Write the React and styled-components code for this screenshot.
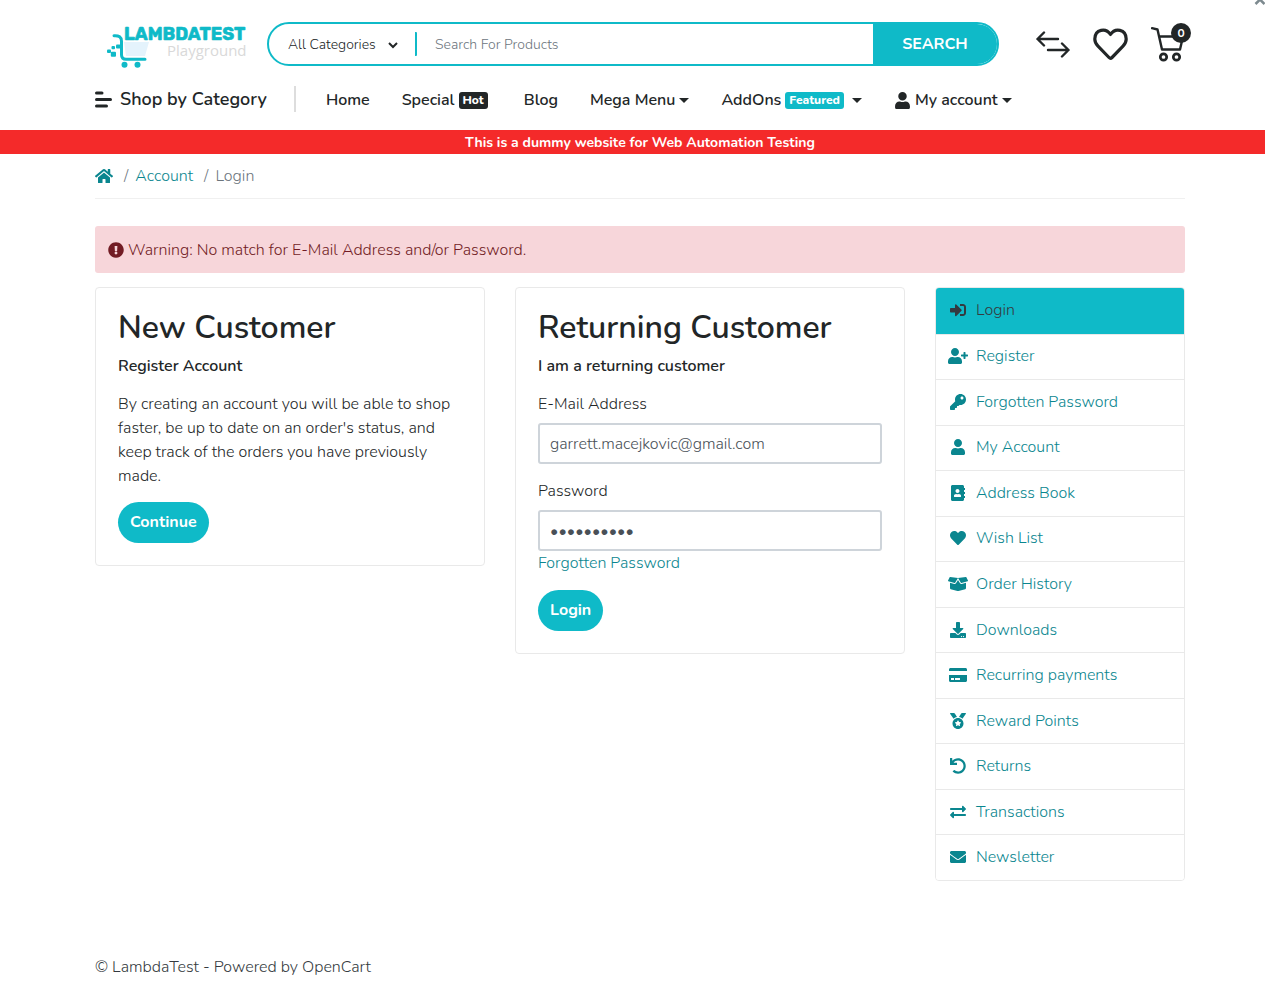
import React from 'react';
import styled, { createGlobalStyle, ThemeProvider } from 'styled-components';
import {
  FaHome, FaSignInAlt, FaUserPlus, FaKey, FaUser, FaAddressBook, FaHeart, FaBoxOpen,
  FaDownload, FaCreditCard, FaMedal, FaUndo, FaExchangeAlt, FaEnvelope, FaExclamationCircle,
} from 'react-icons/fa';

const theme = {
  teal: '#0fbac8',
  link: '#0a868f',
  ink: '#222627',
  line: '#e9e9e9',
  muted: '#6c757d',
};

const GlobalStyle = createGlobalStyle`
  *, *::before, *::after { box-sizing: border-box; }
  body {
    margin: 0;
    background: #fff;
    color: ${theme.ink};
    font: 300 16px/24px Nunito, Lato, "Open Sans", sans-serif;
  }
  button, input, select { font: inherit; color: inherit; margin: 0; }
  a { color: inherit; text-decoration: none; }
  h2, p, ul, ol { margin: 0; padding: 0; }
  ul, ol { list-style: none; }
  svg { display: block; flex: none; }
`;

const Page = styled.div`
  position: relative;
  overflow: hidden;
`;

const ScrollHint = styled.svg`
  position: absolute;
  top: 0;
  right: 0;
`;

const Shell = styled.div`
  padding: 0 15px 0 30px;
`;

const Inner = styled.div`
  max-width: 1090px;
  margin: 0 auto;
`;

const TopBar = styled.div`
  display: grid;
  grid-template-columns: 172px minmax(0, 1fr) auto;
  align-items: center;
  padding-top: 20px;
`;

const LogoLink = styled.a`
  padding-left: 12px;
`;

const LogoMark = styled.text`
  font: 700 18px Rubik, Roboto, sans-serif;
`;

const LogoSub = styled.text`
  font: 400 15px "Open Sans", "Noto Sans", sans-serif;
`;

const SearchForm = styled.form`
  display: flex;
  height: 44px;
  border: 2px solid ${(p) => p.theme.teal};
  border-radius: 22px;
  overflow: hidden;
  font-size: 14px;
`;

const CategoryWrap = styled.div`
  display: grid;
  grid-template-columns: 1fr 10px;
  align-items: center;
  width: 148px;
  padding-right: 17px;
  margin: 8px 0;
  border-right: 2px solid ${(p) => p.theme.teal};
  border-radius: 1px;
`;

const CategorySelect = styled.select`
  appearance: none;
  width: 100%;
  padding: 1px 0 0 19px;
  border: 0;
  background: none;
`;

const SearchInput = styled.input`
  flex: 1;
  min-width: 0;
  padding: 2px 18px 0;
  border: 0;
  outline: 0;
  &::placeholder { color: ${(p) => p.theme.muted}; opacity: 1; }
`;

const SearchButton = styled.button`
  width: 124px;
  border: 0;
  background: ${(p) => p.theme.teal};
  color: #fff;
  font-size: 16px;
  font-weight: 700;
`;

const Tools = styled.div`
  display: flex;
  align-items: center;
  gap: 23px;
  padding-left: 37px;
`;

const ToolLink = styled.a`
  position: relative;
`;

const CartCount = styled.span`
  position: absolute;
  top: -2px;
  right: -6px;
  width: 20px;
  border-radius: 10px;
  background: ${(p) => p.theme.ink};
  color: #fff;
  font-size: 12px;
  font-weight: 700;
  line-height: 20px;
  text-align: center;
`;

const Nav = styled.nav`
  display: flex;
  align-items: center;
  height: 62px;
  font-weight: 600;
`;

const ShopButton = styled.button`
  display: flex;
  align-items: center;
  gap: 8px;
  padding: 0 27px 0 0;
  border: 0;
  border-right: 2px solid #ddd;
  background: none;
  font-size: 18px;
  font-weight: 600;
  line-height: 26px;
`;

const NavList = styled.ul`
  display: flex;
  gap: 32px;
  padding: 2px 0 0 30px;
`;

const NavLink = styled.a`
  display: flex;
  align-items: center;
  gap: 4px;
`;

const Tag = styled.span`
  margin-right: 4px;
  padding: 0 4px;
  border-radius: 3px;
  background: ${(p) => (p.$teal ? p.theme.teal : p.theme.ink)};
  color: #fff;
  font-size: 12px;
  font-weight: 800;
  line-height: 17px;
`;

const Caret = styled.span`
  border: 5px solid transparent;
  border-top-color: currentColor;
  border-bottom: 0;
`;

const Banner = styled.div`
  padding: 1px 0 0 15px;
  background: #f42a2a;
  color: #fff;
  font-size: 14px;
  font-weight: 700;
  line-height: 23px;
  text-align: center;
`;

const Crumbs = styled.ol`
  display: flex;
  align-items: center;
  height: 45px;
  border-bottom: 1px solid #f0f0f0;
  color: ${(p) => p.theme.muted};
`;

const Crumb = styled.li`
  display: flex;
  align-items: center;
  a { color: ${(p) => p.theme.link}; }
  & + &::before { content: '/'; padding: 0 7px 0 11px; }
`;

const Alert = styled.div`
  display: flex;
  align-items: center;
  gap: 4px;
  margin: 27px 0 14px;
  padding: 12px 13px 11px;
  border-radius: 3px;
  background: #f7d6da;
  color: #721c24;
`;

const Columns = styled.div`
  display: grid;
  grid-template-columns: minmax(0, 1fr) minmax(0, 1fr) 250px;
  align-items: start;
  gap: 30px;
`;

const Card = styled.section`
  padding: 20px 22px 22px;
  border: 1px solid ${(p) => p.theme.line};
  border-radius: 4px;
`;

const Title = styled.h2`
  margin-bottom: 6px;
  font-size: 32px;
  font-weight: 600;
  line-height: 40px;
`;

const Text = styled.p`
  margin-bottom: 14px;
  font-weight: ${(p) => (p.$strong ? 600 : 300)};
`;

const Field = styled.div`
  margin-bottom: 15px;
`;

const Label = styled.label`
  display: block;
  margin-bottom: 7px;
`;

const Input = styled.input`
  display: block;
  width: 100%;
  height: 41px;
  padding: 0 10px;
  border: 2px solid #ced4da;
  border-radius: 3px;
  color: #495057;
`;

const TextLink = styled.a`
  display: inline-block;
  color: ${(p) => p.theme.link};
`;

const PillButton = styled.button`
  display: block;
  height: 41px;
  padding: 0 12px 1px;
  border: 0;
  border-radius: 21px;
  background: ${(p) => p.theme.teal};
  color: #fff;
  font-weight: 700;
`;

const Menu = styled.nav`
  display: grid;
  grid-auto-rows: 1fr;
  min-height: 594px;
  border: 1px solid ${(p) => p.theme.line};
  border-radius: 4px;
  overflow: hidden;
`;

const MenuLink = styled.a`
  display: grid;
  grid-template-columns: 20px 1fr;
  align-items: center;
  justify-items: center;
  gap: 8px;
  padding: 0 12px 1px;
  color: ${(p) => (p.$active ? '#343a40' : p.theme.link)};
  background: ${(p) => (p.$active ? p.theme.teal : '#fff')};
  & + & { border-top: 1px solid ${(p) => p.theme.line}; }
  span { justify-self: start; }
`;

const Footer = styled.footer`
  padding: 74px 0 16px;
  color: #343a40;
`;

const menu = [
  ['Login', FaSignInAlt, 16],
  ['Register', FaUserPlus, 20],
  ['Forgotten Password', FaKey, 16],
  ['My Account', FaUser, 16],
  ['Address Book', FaAddressBook, 16],
  ['Wish List', FaHeart, 16],
  ['Order History', FaBoxOpen, 20],
  ['Downloads', FaDownload, 16],
  ['Recurring payments', FaCreditCard, 18],
  ['Reward Points', FaMedal, 16],
  ['Returns', FaUndo, 16],
  ['Transactions', FaExchangeAlt, 16],
  ['Newsletter', FaEnvelope, 16],
];

const Logo = () => (
  <svg width="148" height="48" viewBox="0 0 148 48" role="img" aria-label="LambdaTest Playground">
    <path d="M17 22H42L38 36H19Z" fill="#e4f3fc" />
    <g fill={theme.teal}>
      <path d="M7 15.700q7.500-.5 7.500 5.500v13.500q0 4.500 4.500 4.500h19" fill="none" stroke={theme.teal} strokeWidth="3" strokeLinecap="round" />
      <circle cx="17.500" cy="44.700" r="3" />
      <circle cx="30.500" cy="44.700" r="3" />
      <rect x="9" y="24.500" width="4.500" height="4" rx="1" />
      <rect x="4.500" y="26" width="3.500" height="3.200" rx="1" />
      <rect x="0" y="29.500" width="4" height="3.500" rx="1" />
      <rect x="3.800" y="31.700" width="5.200" height="5" rx="1" />
      <LogoMark x="17" y="20" stroke={theme.teal} strokeWidth="0.600">LAMBDATEST</LogoMark>
    </g>
    <LogoSub x="60" y="36" fill="#d9d9d9">Playground</LogoSub>
  </svg>
);

export default function App() {
  return (
    <ThemeProvider theme={theme}>
      <GlobalStyle />
      <Page>
        <ScrollHint width="11" height="5" viewBox="0 0 11 5" aria-hidden="true">
          <path d="M1.500 4 6 -.5 10.500 4" fill="none" stroke="#7d8a8f" strokeWidth="2.500" />
        </ScrollHint>
        <Shell as="header">
          <Inner>
            <TopBar>
              <LogoLink href="#home"><Logo /></LogoLink>
              <SearchForm role="search">
                <CategoryWrap>
                  <CategorySelect aria-label="Category"><option>All Categories</option></CategorySelect>
                  <svg width="10" height="8" viewBox="0 0 10 8" fill="none" stroke="currentColor" strokeWidth="2">
                    <path d="M1 2l4 4 4-4" />
                  </svg>
                </CategoryWrap>
                <SearchInput type="text" placeholder="Search For Products" aria-label="Search For Products" />
                <SearchButton type="submit">SEARCH</SearchButton>
              </SearchForm>
              <Tools>
                <ToolLink href="#compare" aria-label="Compare">
                  <svg width="34" height="36" viewBox="0 0 34 36" fill="none" stroke="currentColor" strokeWidth="2.400" strokeLinecap="round" strokeLinejoin="round">
                    <path d="M22 13H1.500M8 6.500 1.500 13 8 19.500M12 24h20.500M26 17.500l6.500 6.500-6.500 6.500" />
                  </svg>
                </ToolLink>
                <ToolLink href="#wishlist" aria-label="Wish List">
                  <svg width="35" height="36" viewBox="0 0 35 36" fill="none" stroke="currentColor" strokeWidth="3.200" strokeLinejoin="round">
                    <path d="M17.500 8.500C13 1.500 2 3 1.800 13c0 3 1 5 3.200 7.200L16 31.500q1.500 1.500 3 0L30 20.200c2.200-2.200 3.200-4.200 3.200-7.200C33 3 22 1.500 17.500 8.500Z" />
                  </svg>
                </ToolLink>
                <ToolLink href="#cart" aria-label="Cart">
                  <svg width="34" height="38" viewBox="0 0 34 38" fill="none" stroke="currentColor" strokeWidth="2.400" strokeLinecap="round" strokeLinejoin="round">
                    <path d="M1 3.200 6.500 4.500 11 24.500h18L32 11.500H8" />
                    <circle cx="12.500" cy="32" r="3.200" strokeWidth="2.700" />
                    <circle cx="25.500" cy="32" r="3.200" strokeWidth="2.700" />
                  </svg>
                  <CartCount>0</CartCount>
                </ToolLink>
              </Tools>
            </TopBar>
            <Nav>
              <ShopButton type="button">
                <svg width="17" height="17" viewBox="0 0 17 17" stroke="currentColor" strokeWidth="3" strokeLinecap="round">
                  <path d="M1.500 2H7M1.500 8.500h14M1.500 15h10" />
                </svg>
                Shop by Category
              </ShopButton>
              <NavList>
                <li><NavLink href="#home">Home</NavLink></li>
                <li><NavLink href="#special">Special<Tag>Hot</Tag></NavLink></li>
                <li><NavLink href="#blog">Blog</NavLink></li>
                <li><NavLink href="#mega">Mega Menu<Caret /></NavLink></li>
                <li><NavLink href="#addons">AddOns<Tag $teal>Featured</Tag><Caret /></NavLink></li>
                <li><NavLink href="#account"><FaUser size={17} />My account<Caret /></NavLink></li>
              </NavList>
            </Nav>
          </Inner>
        </Shell>
        <Banner>This is a dummy website for Web Automation Testing</Banner>
        <Shell>
          <Inner>
            <Crumbs>
              <Crumb><a href="#home" aria-label="Home"><FaHome size={18} /></a></Crumb>
              <Crumb><a href="#account">Account</a></Crumb>
              <Crumb>Login</Crumb>
            </Crumbs>
            <Alert role="alert"><FaExclamationCircle /> Warning: No match for E-Mail Address and/or Password.</Alert>
            <Columns>
              <Card>
                <Title>New Customer</Title>
                <Text $strong>Register Account</Text>
                <Text>
                  By creating an account you will be able to shop faster, be up to date on an order's
                  status, and keep track of the orders you have previously made.
                </Text>
                <PillButton type="button">Continue</PillButton>
              </Card>
              <Card>
                <Title>Returning Customer</Title>
                <Text $strong>I am a returning customer</Text>
                <form>
                  <Field>
                    <Label htmlFor="email">E-Mail Address</Label>
                    <Input id="email" type="text" defaultValue="garrett.macejkovic@gmail.com" />
                  </Field>
                  <Field>
                    <Label htmlFor="password">Password</Label>
                    <Input id="password" type="password" defaultValue="abcdefghij" />
                    <TextLink href="#forgotten">Forgotten Password</TextLink>
                  </Field>
                  <PillButton type="submit">Login</PillButton>
                </form>
              </Card>
              <Menu aria-label="Account">
                {menu.map(([label, Icon, size], i) => (
                  <MenuLink key={label} href="#account" $active={i === 0}>
                    <Icon size={size} />
                    <span>{label}</span>
                  </MenuLink>
                ))}
              </Menu>
            </Columns>
            <Footer>© LambdaTest - Powered by OpenCart</Footer>
          </Inner>
        </Shell>
      </Page>
    </ThemeProvider>
  );
}
